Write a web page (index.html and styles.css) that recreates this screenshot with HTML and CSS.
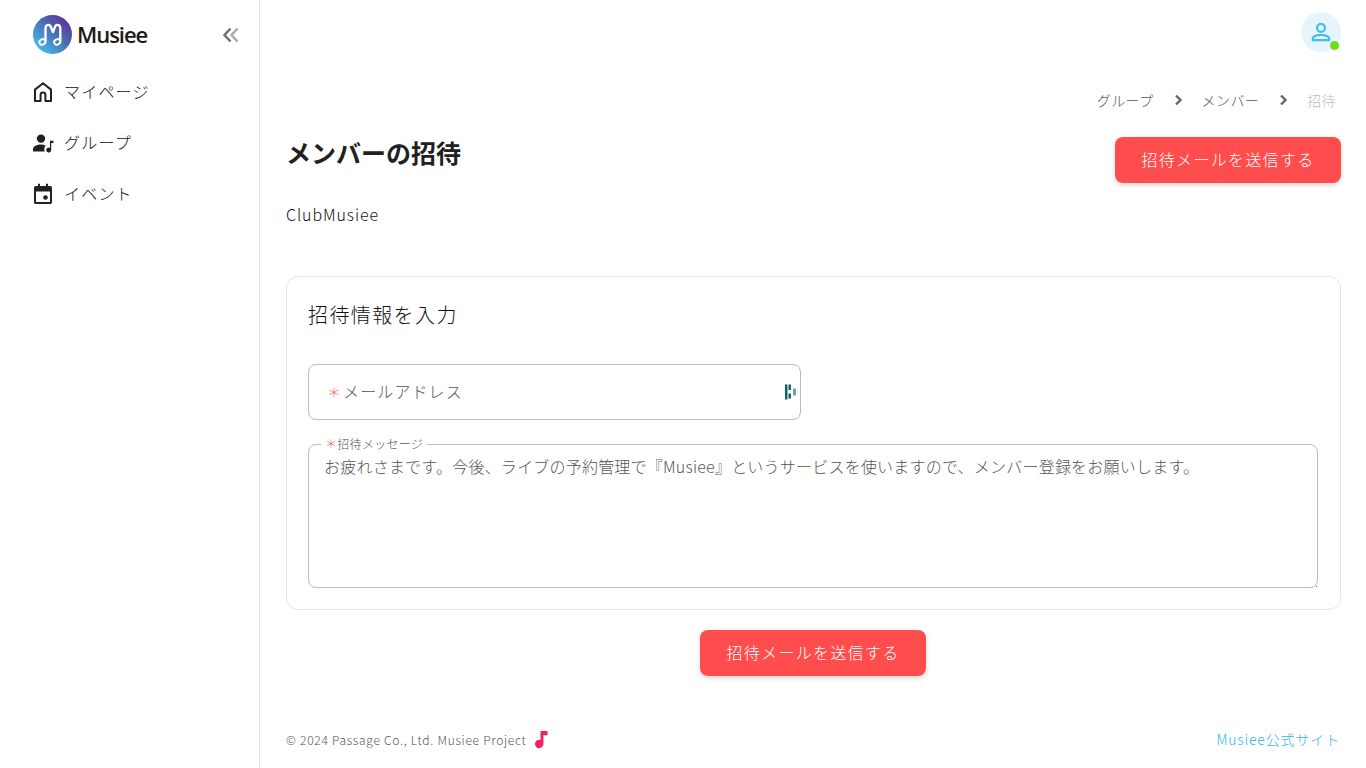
FILE: index.html
```html
<!DOCTYPE html>
<html lang="ja">
<head>
<meta charset="utf-8">
<title>メンバーの招待 | Musiee</title>
<link rel="stylesheet" href="styles.css">
</head>
<body>
<div class="app">
  <aside class="sidebar">
    <div class="brand">
      <div class="logo">
        <svg class="logo-mark" viewBox="0 0 40 40" width="39" height="39">
          <defs>
            <linearGradient id="lg" x1="0.1" y1="0.95" x2="0.9" y2="0.1">
              <stop offset="0" stop-color="#45c4f0"/>
              <stop offset="0.55" stop-color="#4a72b8"/>
              <stop offset="1" stop-color="#5b3096"/>
            </linearGradient>
          </defs>
          <circle cx="20" cy="20" r="20" fill="url(#lg)"/>
          <path d="M12.800 26.500V13.500c0-3 3-4.400 5-2.300L20.500 17.500 23 11.200c2-2.100 5-.7 5 2.300v13" fill="none" stroke="#fff" stroke-width="2.400" stroke-linecap="round" stroke-linejoin="round"/>
          <ellipse cx="9.600" cy="27.600" rx="3.200" ry="2.700" transform="rotate(-25 9.600 27.600)" fill="none" stroke="#fff" stroke-width="2"/>
          <ellipse cx="24.800" cy="27.600" rx="3.200" ry="2.700" transform="rotate(-25 24.800 27.600)" fill="none" stroke="#fff" stroke-width="2"/>
        </svg>
        <span class="logo-text">Musiee</span>
      </div>
      <svg class="collapse" viewBox="0 0 18 16" width="18" height="16">
        <path d="M8.500 1.500 2.500 8l6 6.500" fill="none" stroke="#6f6f6f" stroke-width="2.500"/>
        <path d="M15.500 1.500 9.500 8l6 6.500" fill="none" stroke="#a9a9a9" stroke-width="2.500"/>
      </svg>
    </div>
    <nav class="nav">
      <a class="nav-item">
        <svg viewBox="0 0 24 24" width="24" height="24"><path d="M12 3.300 4 9.600V21h5.600v-6.200a2.400 2.400 0 0 1 4.800 0V21H20V9.600L12 3.300Z" fill="none" stroke="#212121" stroke-width="2" stroke-linejoin="round"/></svg>
        <span>マイページ</span>
      </a>
      <a class="nav-item">
        <svg viewBox="0 0 24 24" width="24" height="24"><circle cx="10" cy="7.600" r="4.200" fill="#212121"/><path d="M2 20.500v-2.200c0-3.200 4.200-4.800 8-4.800 1.700 0 3.300.3 4.700.9-.9 1-1.400 2.400-1.400 3.800 0 .8.200 1.600.5 2.300H2Z" fill="#212121"/><path d="M19 9.800h3.500v2.200H20.200v7a2.500 2.500 0 1 1-1.200-2.100V9.800Z" fill="#212121"/></svg>
        <span>グループ</span>
      </a>
      <a class="nav-item">
        <svg viewBox="0 0 24 24" width="24" height="24"><path d="M7 1.800h2v2.200h6V1.800h2v2.200h2.200c1.100 0 1.800.8 1.800 1.800v14.400c0 1-.8 1.800-1.800 1.800H4.800c-1 0-1.800-.8-1.800-1.800V5.800C3 4.800 3.800 4 4.800 4H7V1.800ZM5 9.500v10.600h14V9.500H5Z" fill="#212121"/><circle cx="14.500" cy="15.500" r="2.300" fill="#212121"/></svg>
        <span>イベント</span>
      </a>
    </nav>
  </aside>

  <main class="main">
    <header class="topbar">
      <div class="avatar">
        <svg viewBox="0 0 24 24" width="24" height="24"><circle cx="12" cy="7.800" r="4" fill="none" stroke="#42bdf0" stroke-width="2.200"/><path d="M3.800 20.200v-1.500c0-2.500 4.800-3.900 8.200-3.900s8.200 1.400 8.200 3.900v1.500H3.800Z" fill="none" stroke="#42bdf0" stroke-width="2.200" stroke-linejoin="round"/></svg>
        <span class="status"></span>
      </div>
    </header>

    <nav class="crumbs">
      <span>グループ</span>
      <svg viewBox="0 0 10 12" width="10" height="12"><path d="M3 1.500 7.500 6 3 10.500" fill="none" stroke="#666" stroke-width="2.400"/></svg>
      <span>メンバー</span>
      <svg viewBox="0 0 10 12" width="10" height="12"><path d="M3 1.500 7.500 6 3 10.500" fill="none" stroke="#666" stroke-width="2.400"/></svg>
      <span class="current">招待</span>
    </nav>

    <section class="title-row">
      <div>
        <h1>メンバーの招待</h1>
        <p class="group">ClubMusiee</p>
      </div>
      <button class="btn">招待メールを送信する</button>
    </section>

    <section class="card">
      <h2>招待情報を入力</h2>
      <div class="email">
        <span class="email-label"><span class="req">＊</span>メールアドレス</span>
        <svg class="ext-icon" viewBox="0 0 12 16" width="12" height="16"><path d="M0 .5h2.500v15H0zM3.500 .5H6v5.500H3.500zM3.500 9.500H6v5H3.500z" fill="#13606f"/><path d="M8 4.500h3v7H8z" fill="#13606f" opacity=".6"/></svg>
      </div>
      <div class="message">
        <label class="message-label"><span class="req">＊</span>招待メッセージ</label>
        <textarea class="message-box" readonly>お疲れさまです。今後、ライブの予約管理で『Musiee』というサービスを使いますので、メンバー登録をお願いします。</textarea>
      </div>
    </section>

    <div class="bottom-action">
      <button class="btn">招待メールを送信する</button>
    </div>

    <footer class="footer">
      <div class="copy">
        <span>© 2024 Passage Co., Ltd. Musiee Project</span>
        <svg viewBox="0 0 16 20" width="16" height="20"><path d="M7.500 2h7v4.200H10.400V15a4.200 4.200 0 1 1-2.900-4V2Z" fill="#ef2268"/></svg>
      </div>
      <a class="site-link">Musiee公式サイト</a>
    </footer>
  </main>
</div>
</body>
</html>
```
FILE: styles.css
```css
* { box-sizing: border-box; }
html, body { margin: 0; height: 100%; }
body {
  font-family: "Noto Sans CJK JP", "Noto Sans", sans-serif;
  font-weight: 300;
  color: #212121;
  background: #fff;
  overflow: hidden;
}
.app { display: flex; height: 768px; }

.sidebar {
  width: 260px;
  flex: none;
  border-right: 1px solid #e4e4e4;
  padding: 15px 20px 0 33px;
}
.brand { display: flex; align-items: center; justify-content: space-between; height: 39px; }
.logo { display: flex; align-items: center; gap: 5px; }
.logo-mark { display: block; }
.logo-text {
  font-family: "Open Sans", sans-serif;
  font-weight: 600;
  font-size: 22px;
  line-height: 39px;
  letter-spacing: -1.05px;
  color: #231815;
}
.collapse { display: block; margin-right: -1px; }

.nav { display: flex; flex-direction: column; margin-top: 12px; }
.nav-item {
  display: flex;
  align-items: center;
  gap: 9px;
  height: 51px;
  margin-left: -2px;
  font-size: 16px;
  letter-spacing: 1.2px;
  color: #111;
}
.nav-item span { padding-bottom: 2px; }

.main { flex: 1; min-width: 0; padding: 0 25px 0 26px; display: flex; flex-direction: column; }
.topbar { display: flex; justify-content: flex-end; padding-top: 12px; height: 52px; }
.avatar {
  position: relative;
  width: 40px;
  height: 40px;
  border-radius: 50%;
  background: #e6f5fc;
  display: flex;
  align-items: center;
  justify-content: center;
}
.status {
  position: absolute;
  right: 2px;
  bottom: 2px;
  width: 9px;
  height: 9px;
  border-radius: 50%;
  background: #6fdd1c;
}

.crumbs {
  display: flex;
  justify-content: flex-end;
  align-items: center;
  gap: 19px;
  height: 24px;
  margin-top: 36px;
  padding-right: 5px;
  font-size: 14px;
  letter-spacing: 0.4px;
  color: #555;
}
.crumbs .current { color: #bdbdbd; }

.title-row { display: flex; justify-content: space-between; align-items: flex-start; margin-top: 25px; }
h1 { margin: 0; font-size: 25px; line-height: 30px; font-weight: 700; letter-spacing: 0; color: #212121; }
.group { margin: 35px 0 0; font-size: 16px; line-height: 24px; letter-spacing: 0.9px; color: #111; }

.btn {
  font-family: inherit;
  font-size: 16px;
  font-weight: 300;
  letter-spacing: 1.3px;
  color: #fff;
  background: #ff4d4d;
  border: 0;
  border-radius: 8px;
  width: 226px;
  height: 46px;
  padding: 0 0 2px;
  box-shadow: 0 2px 5px rgba(0, 0, 0, 0.18);
}

.card {
  margin-top: 50px;
  height: 334px;
  border: 1px solid #e6e6e6;
  border-radius: 12px;
  padding: 22px 22px 21px 21px;
}
h2 { margin: 0; font-size: 20px; line-height: 32px; font-weight: 300; letter-spacing: 1.4px; color: #111; }

.email {
  display: flex;
  align-items: center;
  justify-content: space-between;
  margin-top: 33px;
  width: 493px;
  height: 56px;
  border: 1px solid #bdbdbd;
  border-radius: 8px;
  padding: 0 3px 0 18px;
}
.email-label { display: flex; align-items: center; padding-bottom: 2px; font-size: 16px; letter-spacing: 1.1px; color: #555; }
.req { color: #ff6b6b; }
.email-label .req { font-size: 14px; margin-right: 1px; }
.ext-icon { display: block; }

.message { position: relative; margin-top: 24px; }
.message::after {
  content: "";
  position: absolute;
  right: 1px;
  bottom: 1px;
  width: 1px;
  height: 1px;
  background: #555;
}
.message-label {
  position: absolute;
  left: 13px;
  top: -9px;
  padding: 0 4px;
  background: #fff;
  font-size: 12px;
  line-height: 18px;
  letter-spacing: 0.3px;
  color: #555;
}
.message-box {
  display: block;
  width: 100%;
  height: 144px;
  border: 1px solid #bdbdbd;
  border-radius: 8px;
  padding: 9px 15px;
  font-family: inherit;
  font-size: 16px;
  font-weight: 300;
  line-height: 24px;
  letter-spacing: 0.22px;
  color: #555;
  outline: none;
  resize: none;
}

.bottom-action { display: flex; justify-content: center; margin-top: 20px; padding-right: 1px; }

.footer { display: flex; justify-content: space-between; align-items: center; margin-top: 49px; height: 28px; }
.copy { display: flex; align-items: center; gap: 6px; font-size: 12px; letter-spacing: 0.73px; color: #555; }
.site-link { font-size: 14px; letter-spacing: 0.85px; color: #30b4ec; padding-right: 1px; }
```
